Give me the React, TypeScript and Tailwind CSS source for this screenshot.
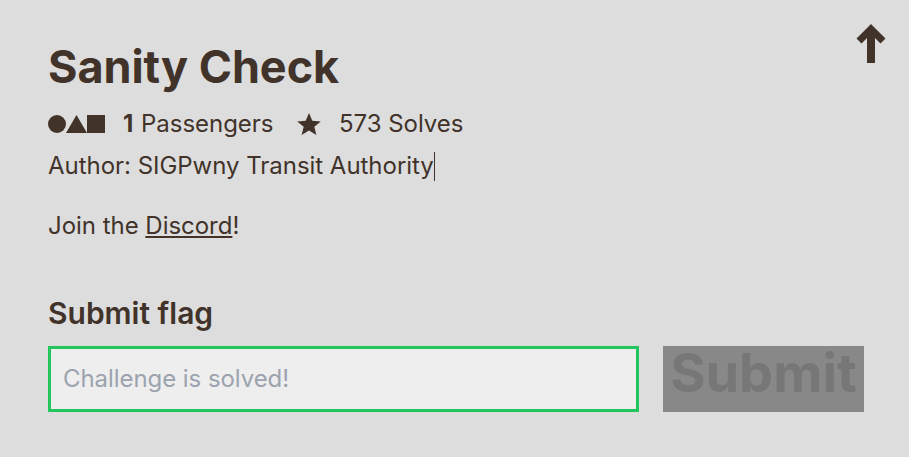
export default function App() {
  return (
    <main className="h-[457px] w-[909px] overflow-hidden bg-[#dddddd] font-['Inter',sans-serif] text-[24px] text-[#41332a]">
      <div className="flex h-full items-start pl-12">
        <div className="w-[808px] shrink-0 pt-10">
          <h1 className="h-[54px] text-[45px] font-bold leading-[54px] tracking-[-0.05px]">Sanity Check</h1>
          <div className="mt-[9px] flex h-[42px] items-center leading-[42px] tracking-[-0.03px]">
            <svg width="57" height="18" viewBox="0 0 57 18" fill="currentColor">
              <circle cx="9" cy="9" r="9" />
              <path d="M28.500 0L39 18H18Z" />
              <path d="M39 0h18v18H39z" />
            </svg>
            <p className="ml-[18px] w-[174px] whitespace-nowrap"><b className="mr-px">1</b> Passengers</p>
            <svg width="24" height="24" viewBox="0 0 24 24" fill="currentColor">
              <path d="M12 1l3.300 7.800 8.500.6-6.500 5.400 2.100 8.200L12 18.500 4.600 23l2.100-8.200L.2 9.400l8.500-.6z" />
            </svg>
            <p className="ml-[18px] whitespace-nowrap">573 Solves</p>
          </div>
          <div className="flex h-[42px] items-center tracking-[-0.03px]">
            <p className="whitespace-nowrap">Author: SIGPwny Transit Authority</p>
            <span className="h-[29px] w-px bg-[#41332a]" />
          </div>
          <p className="mt-[18px] h-[42px] leading-[42px] tracking-[-0.03px]">Join the <a className="underline">Discord</a>!</p>
          <h2 className="mt-12 h-[36px] text-[30px] font-semibold leading-[36px]">Submit flag</h2>
          <div className="mt-[15px] flex w-[816px] gap-6">
            <input className="h-[66px] w-[591px] border-[3px] border-[#22c55e] bg-[#eeeeee] px-3 pb-0.5 tracking-[-0.06px] placeholder:text-[#9ca3af]" placeholder="Challenge is solved!" />
            <button className="flex h-[66px] w-[201px] items-start justify-center bg-[#888888] text-[54px] font-bold leading-[54px] text-[#777777]">Submit</button>
          </div>
        </div>
        <svg className="mt-6 shrink-0" width="30" height="39" viewBox="0 0 30 39" fill="currentColor">
          <path d="M15 0L29.500 14.500l-5 5-5.500-5.500V39H11V14l-5.500 5.500-5-5z" />
        </svg>
      </div>
    </main>
  );
}
